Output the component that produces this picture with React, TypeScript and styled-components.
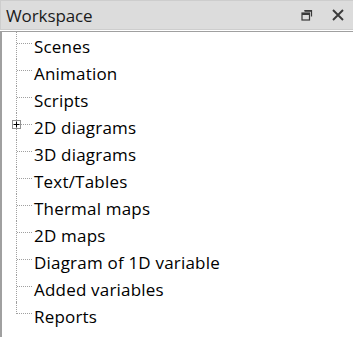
import React from 'react';
import styled, { createGlobalStyle } from 'styled-components';

const GlobalStyle = createGlobalStyle`
  html, body {
    margin: 0;
    padding: 0;
    background: #ffffff;
  }
  body {
    font-family: 'Open Sans', 'Noto Sans', 'Liberation Sans', sans-serif;
  }
`;

const Panel = styled.div`
  width: 353px;
  height: 337px;
  display: flex;
  flex-direction: column;
  background: #ffffff;
  overflow: hidden;
`;

const Header = styled.div`
  height: 28px;
  display: flex;
  align-items: center;
  background: #dcdcdc;
  border: 1px solid #cdcdcd;
  border-right: none;
  padding: 0 5px 0 5px;
`;

const Title = styled.div`
  flex: 1;
  font-size: 17px;
  color: #1b1b1b;
  letter-spacing: -0.1px;
`;

const HeaderButton = styled.button`
  width: 20px;
  height: 20px;
  margin-left: 11px;
  padding: 0;
  border: none;
  background: transparent;
  display: flex;
  align-items: center;
  justify-content: center;
`;

const Body = styled.div`
  flex: 1;
  margin-top: 1px;
  border-top: 1px solid #a0a0a0;
  border-left: 2px solid #a0a0a0;
  padding-left: 14px;
`;

const Row = styled.div`
  height: 27px;
  display: flex;
  align-items: center;
`;

const Guide = styled.span<{ $last?: boolean }>`
  position: relative;
  align-self: stretch;
  width: 18px;
  flex-shrink: 0;

  &::before {
    content: '';
    position: absolute;
    left: 0;
    top: 0;
    height: ${p => (p.$last ? '12px' : '27px')};
    border-left: 1px dotted #a0a0a0;
  }

  &::after {
    content: '';
    position: absolute;
    left: 1px;
    top: 11px;
    width: 15px;
    border-top: 1px dotted #a0a0a0;
  }
`;

const Expander = styled.span`
  position: absolute;
  left: -4px;
  top: 7px;
  width: 7px;
  height: 7px;
  border: 1px solid #919191;
  background: #ffffff;
  z-index: 1;
  display: flex;
  align-items: center;
  justify-content: center;
`;

const Label = styled.span`
  font-size: 17px;
  color: #000000;
  white-space: nowrap;
  letter-spacing: 0.2px;
  margin-top: 1px;
`;

const items = [
  'Scenes',
  'Animation',
  'Scripts',
  '2D diagrams',
  '3D diagrams',
  'Text/Tables',
  'Thermal maps',
  '2D maps',
  'Diagram of 1D variable',
  'Added variables',
  'Reports',
];

const expandable = ['2D diagrams'];

const App: React.FC = () => {
  return (
    <>
      <GlobalStyle />
      <Panel>
        <Header>
          <Title>Workspace</Title>
          <HeaderButton aria-label="Float">
            <svg width="12" height="12" viewBox="0 0 12 12">
              <path d="M3.5 1.5h7v6" fill="none" stroke="#3a3a3a" strokeWidth="1.2" />
              <rect x="1" y="4" width="7.5" height="7" fill="none" stroke="#3a3a3a" strokeWidth="1.2" />
              <rect x="1" y="4" width="7.5" height="2" fill="#3a3a3a" />
              <rect x="3.5" y="1" width="7" height="1.8" fill="#3a3a3a" />
            </svg>
          </HeaderButton>
          <HeaderButton aria-label="Close">
            <svg width="12" height="12" viewBox="0 0 12 12">
              <path d="M1 1l10 10M11 1l-10 10" stroke="#3a3a3a" strokeWidth="1.9" />
            </svg>
          </HeaderButton>
        </Header>
        <Body>
          {items.map((item, i) => (
            <Row key={item}>
              <Guide $last={i === items.length - 1}>
                {expandable.includes(item) && (
                  <Expander>
                    <svg width="7" height="7" viewBox="0 0 7 7">
                      <path d="M0.5 3.5h6M3.5 0.5v6" stroke="#000" strokeWidth="1" />
                    </svg>
                  </Expander>
                )}
              </Guide>
              <Label>{item}</Label>
            </Row>
          ))}
        </Body>
      </Panel>
    </>
  );
};

export default App;
